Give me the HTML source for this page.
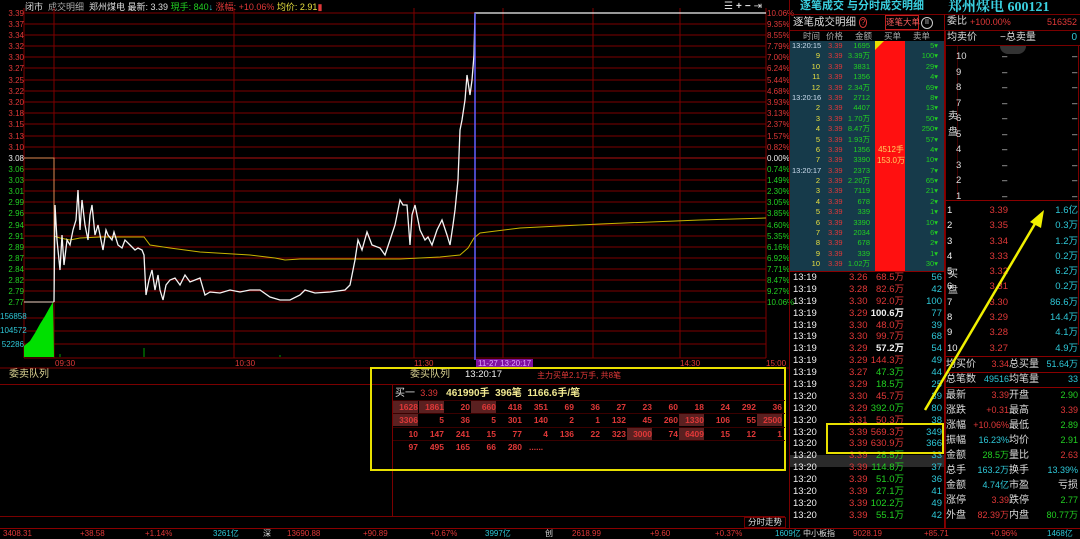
<!DOCTYPE html>
<html><head><meta charset="utf-8">
<style>
*{margin:0;padding:0;box-sizing:border-box}
body{width:1080px;height:538px;background:#000;overflow:hidden;position:relative;font-family:"Liberation Sans","Noto Sans CJK SC",sans-serif;font-size:9px;color:#ddd}
.a{position:absolute;white-space:nowrap;line-height:10px}
.r{color:#e03838}.g{color:#22d022}.c{color:#2ec8d8}.w{color:#f0f0f0}.y{color:#e8e040}.gr{color:#aaa}
.hl{position:absolute;height:1px;background:#7a0000}
.vl{position:absolute;width:1px;background:#7a0000}
.lab{position:absolute;left:0;width:24px;text-align:right;font-size:8px;line-height:9px}
.pct{position:absolute;left:767px;font-size:8px;line-height:9px}
.ob{font-size:10px;line-height:12px}
.q{position:absolute;width:25px;text-align:right;font-size:8.5px;line-height:12px;color:#e03838;font-weight:bold}
.qb{background:#5a2020}
</style></head><body>

<div class="a" style="left:25px;top:2px;font-size:9px;color:#ddd">闭市&nbsp; <span class="gr">成交明细</span>&nbsp; 郑州煤电 最新: 3.39 <span class="g">現手: 840</span><span class="c">↓</span> <span class="r">涨幅: +10.06%</span> <span class="y">均价: 2.91</span><span class="r">▮</span></div>
<div class="a" style="left:724px;top:2px;font-size:10px;color:#ddd;letter-spacing:3px">☰<b>+</b><b>−</b>⇥</div>

<svg width="800" height="370" style="position:absolute;left:0;top:0">
<g stroke="#7e0000" stroke-width="1">
<line x1="24" y1="13" x2="766" y2="13"/><line x1="24" y1="24" x2="766" y2="24"/><line x1="24" y1="35" x2="766" y2="35"/><line x1="24" y1="46" x2="766" y2="46"/><line x1="24" y1="57" x2="766" y2="57"/><line x1="24" y1="68" x2="766" y2="68"/><line x1="24" y1="80" x2="766" y2="80"/><line x1="24" y1="91" x2="766" y2="91"/><line x1="24" y1="102" x2="766" y2="102"/><line x1="24" y1="113" x2="766" y2="113"/><line x1="24" y1="124" x2="766" y2="124"/><line x1="24" y1="136" x2="766" y2="136"/><line x1="24" y1="147" x2="766" y2="147"/><line x1="24" y1="158" x2="766" y2="158" stroke="#b01010"/><line x1="24" y1="169" x2="766" y2="169"/><line x1="24" y1="180" x2="766" y2="180"/><line x1="24" y1="191" x2="766" y2="191"/><line x1="24" y1="202" x2="766" y2="202"/><line x1="24" y1="213" x2="766" y2="213"/><line x1="24" y1="225" x2="766" y2="225"/><line x1="24" y1="236" x2="766" y2="236"/><line x1="24" y1="247" x2="766" y2="247"/><line x1="24" y1="258" x2="766" y2="258"/><line x1="24" y1="269" x2="766" y2="269"/><line x1="24" y1="280" x2="766" y2="280"/><line x1="24" y1="291" x2="766" y2="291"/><line x1="24" y1="302" x2="766" y2="302"/>
<line x1="24" y1="318" x2="766" y2="318"/><line x1="24" y1="331" x2="766" y2="331"/><line x1="24" y1="344" x2="766" y2="344"/><line x1="24" y1="358" x2="766" y2="358"/>
<line x1="54" y1="8" x2="54" y2="358"/><line x1="234" y1="8" x2="234" y2="358"/><line x1="414" y1="8" x2="414" y2="358"/><line x1="503" y1="8" x2="503" y2="358"/><line x1="593" y1="8" x2="593" y2="358"/><line x1="680" y1="8" x2="680" y2="358"/><line x1="766" y1="8" x2="766" y2="358"/>
<line x1="24" y1="8" x2="24" y2="358"/>
<line x1="0" y1="368" x2="790" y2="368"/>
</g>
<polygon fill="#00e000" points="24,357 24,346 30,341 35,333 40,324 45,316 50,307 53,302 54,357"/>
<g stroke="#00a000"><line x1="144" y1="357" x2="144" y2="348"/><line x1="60" y1="357" x2="60" y2="354"/><line x1="280" y1="357" x2="280" y2="355"/></g>
<polyline fill="none" stroke="#e08850" stroke-width="1" points="24,158 54,158 54,302"/>
<polyline fill="none" stroke="#f0d0c0" points="24,302 54,302"/>
<polyline fill="none" stroke="#c8b400" stroke-width="1" points="54,236 60,238 70,240 80,238 100,237 144,237 150,245 170,248 200,252 250,255 275,258 285,260 300,259 350,259 400,259 440,257 460,255 468,248 474,238 480,233 520,228 600,224 700,220 766,218"/>
<polyline fill="none" stroke="#f4f4f4" stroke-width="1.3" points="54,302 55,205 57,240 60,270 62,235 64,265 67,240 70,245 73,230 76,220 78,190 80,230 82,200 85,225 88,240 90,215 92,205 95,235 98,225 100,235 103,250 106,230 108,235 112,240 114,232 118,245 122,248 125,240 130,245 135,250 138,248 142,250 144,255 146,295 149,280 152,270 155,290 158,275 160,290 163,300 166,285 170,280 175,278 180,285 185,275 190,282 195,280 200,278 205,295 210,292 220,293 230,290 240,292 250,290 260,290 270,297 280,300 290,300 300,295 305,290 315,293 330,292 345,290 350,285 355,260 358,240 362,250 367,232 372,245 380,248 385,255 390,240 395,225 400,200 403,205 407,205 410,245 412,215 415,205 418,220 420,230 425,240 428,237 432,245 437,230 442,220 447,235 450,245 453,225 455,210 458,180 460,130 462,120 465,100 467,75 470,95 472,80 474,55 475,13 766,13"/>
<line x1="475" y1="13" x2="475" y2="360" stroke="#6060ff" stroke-width="1.5"/>
</svg>

<div class="lab r" style="top:9px">3.39</div><div class="lab r" style="top:20px">3.37</div><div class="lab r" style="top:31px">3.34</div><div class="lab r" style="top:42px">3.32</div><div class="lab r" style="top:53px">3.30</div><div class="lab r" style="top:64px">3.27</div><div class="lab r" style="top:76px">3.25</div><div class="lab r" style="top:87px">3.22</div><div class="lab r" style="top:98px">3.20</div><div class="lab r" style="top:109px">3.18</div><div class="lab r" style="top:120px">3.15</div><div class="lab r" style="top:132px">3.13</div><div class="lab r" style="top:143px">3.10</div><div class="lab w" style="top:154px">3.08</div><div class="lab g" style="top:165px">3.06</div><div class="lab g" style="top:176px">3.03</div><div class="lab g" style="top:187px">3.01</div><div class="lab g" style="top:198px">2.99</div><div class="lab g" style="top:209px">2.96</div><div class="lab g" style="top:221px">2.94</div><div class="lab g" style="top:232px">2.91</div><div class="lab g" style="top:243px">2.89</div><div class="lab g" style="top:254px">2.87</div><div class="lab g" style="top:265px">2.84</div><div class="lab g" style="top:276px">2.82</div><div class="lab g" style="top:287px">2.79</div><div class="lab g" style="top:298px">2.77</div>
<div class="lab c" style="top:312px">156858</div><div class="lab c" style="top:326px">104572</div><div class="lab c" style="top:340px">52286</div>

<div class="pct r" style="top:9px">10.06%</div><div class="pct r" style="top:20px">9.35%</div><div class="pct r" style="top:31px">8.55%</div><div class="pct r" style="top:42px">7.79%</div><div class="pct r" style="top:53px">7.00%</div><div class="pct r" style="top:64px">6.24%</div><div class="pct r" style="top:76px">5.44%</div><div class="pct r" style="top:87px">4.68%</div><div class="pct r" style="top:98px">3.93%</div><div class="pct r" style="top:109px">3.13%</div><div class="pct r" style="top:120px">2.37%</div><div class="pct r" style="top:132px">1.57%</div><div class="pct r" style="top:143px">0.82%</div><div class="pct w" style="top:154px">0.00%</div><div class="pct g" style="top:165px">0.74%</div><div class="pct g" style="top:176px">1.49%</div><div class="pct g" style="top:187px">2.30%</div><div class="pct g" style="top:198px">3.05%</div><div class="pct g" style="top:209px">3.85%</div><div class="pct g" style="top:221px">4.60%</div><div class="pct g" style="top:232px">5.35%</div><div class="pct g" style="top:243px">6.16%</div><div class="pct g" style="top:254px">6.92%</div><div class="pct g" style="top:265px">7.71%</div><div class="pct g" style="top:276px">8.47%</div><div class="pct g" style="top:287px">9.27%</div><div class="pct g" style="top:298px">10.06%</div>

<div class="a r" style="left:55px;top:359px;font-size:8px">09:30</div>
<div class="a r" style="left:235px;top:359px;font-size:8px">10:30</div>
<div class="a r" style="left:414px;top:359px;font-size:8px">11:30</div>
<div class="a" style="left:476px;top:359px;font-size:8px;background:#8010a0;color:#e0a0ff;padding:0 2px">11-27 13:20:17</div>
<div class="a r" style="left:680px;top:359px;font-size:8px">14:30</div>
<div class="a r" style="left:766px;top:359px;font-size:8px">15:00</div>

<div class="a y" style="left:9px;top:370px;font-size:10px;color:#d8d090">委卖队列</div>
<div class="hl" style="left:0;top:384px;width:372px"></div>
<div class="hl" style="left:0;top:516px;width:785px"></div>
<div class="vl" style="left:392px;top:384px;height:132px"></div>

<div style="position:absolute;left:370px;top:367px;width:416px;height:104px;border:2px solid #e8e000"></div>
<div class="a" style="left:410px;top:370px;font-size:10px;color:#d8d090">委买队列</div>
<div class="a w" style="left:465px;top:370px;font-size:9.5px">13:20:17</div>
<div class="a r" style="left:537px;top:371px;font-size:8px">主力买单2.1万手, 共8笔</div>
<div class="hl" style="left:372px;top:384px;width:412px"></div>
<div class="a" style="left:395px;top:388px;font-size:10px;color:#ddd">买一 <span class="r" style="font-size:9px">&nbsp;3.39</span> &nbsp; <b class="y" style="color:#f0e890">461990手&nbsp; 396笔&nbsp; 1166.6手/笔</b></div>
<div class="hl" style="left:393px;top:400px;width:392px;background:#3a0000"></div>
<div class="hl" style="left:393px;top:413px;width:392px;background:#3a0000"></div>
<div class="hl" style="left:393px;top:427px;width:392px;background:#3a0000"></div>
<div class="hl" style="left:393px;top:440px;width:392px;background:#3a0000"></div>
<div style="position:absolute;left:393px;top:401px">
<div class="q qb" style="left:0">1628</div><div class="q qb" style="left:26px">1861</div><div class="q" style="left:52px">20</div><div class="q qb" style="left:78px">660</div><div class="q" style="left:104px">418</div><div class="q" style="left:130px">351</div><div class="q" style="left:156px">69</div><div class="q" style="left:182px">36</div><div class="q" style="left:208px">27</div><div class="q" style="left:234px">23</div><div class="q" style="left:260px">60</div><div class="q" style="left:286px">18</div><div class="q" style="left:312px">24</div><div class="q" style="left:338px">292</div><div class="q" style="left:364px">36</div>
</div>
<div style="position:absolute;left:393px;top:414px">
<div class="q qb" style="left:0">3306</div><div class="q" style="left:26px">5</div><div class="q" style="left:52px">36</div><div class="q" style="left:78px">5</div><div class="q" style="left:104px">301</div><div class="q" style="left:130px">140</div><div class="q" style="left:156px">2</div><div class="q" style="left:182px">1</div><div class="q" style="left:208px">132</div><div class="q" style="left:234px">45</div><div class="q" style="left:260px">260</div><div class="q qb" style="left:286px">1330</div><div class="q" style="left:312px">106</div><div class="q" style="left:338px">55</div><div class="q qb" style="left:364px">2500</div>
</div>
<div style="position:absolute;left:393px;top:428px">
<div class="q" style="left:0">10</div><div class="q" style="left:26px">147</div><div class="q" style="left:52px">241</div><div class="q" style="left:78px">15</div><div class="q" style="left:104px">77</div><div class="q" style="left:130px">4</div><div class="q" style="left:156px">136</div><div class="q" style="left:182px">22</div><div class="q" style="left:208px">323</div><div class="q qb" style="left:234px">3000</div><div class="q" style="left:260px">74</div><div class="q qb" style="left:286px">6409</div><div class="q" style="left:312px">15</div><div class="q" style="left:338px">12</div><div class="q" style="left:364px">1</div>
</div>
<div style="position:absolute;left:393px;top:441px">
<div class="q" style="left:0">97</div><div class="q" style="left:26px">495</div><div class="q" style="left:52px">165</div><div class="q" style="left:78px">66</div><div class="q" style="left:104px">280</div><div class="q" style="left:130px;text-align:left;padding-left:6px">......</div>
</div>

<div class="a" style="left:744px;top:517px;width:42px;height:11px;border:1px solid #6e0000;font-size:8.5px;line-height:9px;color:#ddd;text-align:center">分时走势</div>

<div class="vl" style="left:789px;top:0;height:528px"></div>
<div class="a" style="left:800px;top:1px;font-size:11px;font-weight:bold;color:#3ad0e0">逐笔成交 与分时成交明细</div>
<div class="a" style="left:948px;top:0px;font-size:14px;line-height:16px;font-weight:bold;color:#3ad0e0;font-family:'Liberation Serif','Noto Serif CJK SC',serif">郑州煤电 600121</div>
<div class="hl" style="left:790px;top:14px;width:290px"></div>
<div class="a" style="left:793px;top:17px;font-size:10.5px;color:#ddd">逐笔成交明细 <span class="r" style="font-size:8px;border:1px solid #e03838;border-radius:50%;padding:0 1px">?</span></div>
<div class="a r" style="left:885px;top:15px;width:34px;height:15px;border:1.5px solid #c02020;font-size:8.5px;line-height:12px;text-align:center;color:#ff6060">逐笔大单</div>
<div class="a" style="left:921px;top:17px;width:12px;height:12px;border-radius:50%;border:1.5px solid #ccc;font-size:7px;line-height:9px;text-align:center;color:#ddd">II</div>
<div class="vl" style="left:944px;top:14px;height:514px;background:#8a0000"></div>
<div class="hl" style="left:790px;top:30px;width:155px"></div>
<div class="a gr" style="left:803px;top:31px;font-size:8.5px">时间</div><div class="a gr" style="left:826px;top:31px;font-size:8.5px">价格</div><div class="a gr" style="left:855px;top:31px;font-size:8.5px">金额</div><div class="a gr" style="left:884px;top:31px;font-size:8.5px">买单</div><div class="a gr" style="left:913px;top:31px;font-size:8.5px">卖单</div>
<div style="position:absolute;left:790px;top:41px;width:154px;height:230px;background:#163a4a"></div>
<div style="position:absolute;left:875px;top:41px;width:30px;height:230px;background:#ff1010"></div>
<div style="position:absolute;left:875px;top:41px;width:0;height:0;border-top:9px solid #e8e000;border-right:9px solid transparent"></div>
<div class="a" style="left:877px;top:145px;width:28px;text-align:center;font-size:8px;color:#ffd060">4512手</div>
<div class="a" style="left:875px;top:156px;width:32px;text-align:center;font-size:8px;color:#ffd060">153.0万</div>
<div class="hl" style="left:790px;top:271px;width:155px;background:#8a0000"></div>

<div style="position:absolute;left:790px;top:41px;width:154px;font-size:7.5px;line-height:10.4px">
<div style="position:relative;height:10.4px"><span class="a" style="left:2px;color:#cde">13:20:15</span><span class="a r" style="left:38px">3.39</span><span class="a g" style="right:74px">1695</span><span class="a g" style="right:6px">5▾</span></div>
<div style="position:relative;height:10.4px"><span class="a y" style="right:124px">9</span><span class="a r" style="left:38px">3.39</span><span class="a g" style="right:74px">3.39万</span><span class="a g" style="right:6px">100▾</span></div>
<div style="position:relative;height:10.4px"><span class="a y" style="right:124px">10</span><span class="a r" style="left:38px">3.39</span><span class="a g" style="right:74px">3831</span><span class="a g" style="right:6px">29▾</span></div>
<div style="position:relative;height:10.4px"><span class="a y" style="right:124px">11</span><span class="a r" style="left:38px">3.39</span><span class="a g" style="right:74px">1356</span><span class="a g" style="right:6px">4▾</span></div>
<div style="position:relative;height:10.4px"><span class="a y" style="right:124px">12</span><span class="a r" style="left:38px">3.39</span><span class="a g" style="right:74px">2.34万</span><span class="a g" style="right:6px">69▾</span></div>
<div style="position:relative;height:10.4px"><span class="a" style="left:2px;color:#cde">13:20:16</span><span class="a r" style="left:38px">3.39</span><span class="a g" style="right:74px">2712</span><span class="a g" style="right:6px">8▾</span></div>
<div style="position:relative;height:10.4px"><span class="a y" style="right:124px">2</span><span class="a r" style="left:38px">3.39</span><span class="a g" style="right:74px">4407</span><span class="a g" style="right:6px">13▾</span></div>
<div style="position:relative;height:10.4px"><span class="a y" style="right:124px">3</span><span class="a r" style="left:38px">3.39</span><span class="a g" style="right:74px">1.70万</span><span class="a g" style="right:6px">50▾</span></div>
<div style="position:relative;height:10.4px"><span class="a y" style="right:124px">4</span><span class="a r" style="left:38px">3.39</span><span class="a g" style="right:74px">8.47万</span><span class="a g" style="right:6px">250▾</span></div>
<div style="position:relative;height:10.4px"><span class="a y" style="right:124px">5</span><span class="a r" style="left:38px">3.39</span><span class="a g" style="right:74px">1.93万</span><span class="a g" style="right:6px">57▾</span></div>
<div style="position:relative;height:10.4px"><span class="a y" style="right:124px">6</span><span class="a r" style="left:38px">3.39</span><span class="a g" style="right:74px">1356</span><span class="a g" style="right:6px">4▾</span></div>
<div style="position:relative;height:10.4px"><span class="a y" style="right:124px">7</span><span class="a r" style="left:38px">3.39</span><span class="a g" style="right:74px">3390</span><span class="a g" style="right:6px">10▾</span></div>
<div style="position:relative;height:10.4px"><span class="a" style="left:2px;color:#cde">13:20:17</span><span class="a r" style="left:38px">3.39</span><span class="a g" style="right:74px">2373</span><span class="a g" style="right:6px">7▾</span></div>
<div style="position:relative;height:10.4px"><span class="a y" style="right:124px">2</span><span class="a r" style="left:38px">3.39</span><span class="a g" style="right:74px">2.20万</span><span class="a g" style="right:6px">65▾</span></div>
<div style="position:relative;height:10.4px"><span class="a y" style="right:124px">3</span><span class="a r" style="left:38px">3.39</span><span class="a g" style="right:74px">7119</span><span class="a g" style="right:6px">21▾</span></div>
<div style="position:relative;height:10.4px"><span class="a y" style="right:124px">4</span><span class="a r" style="left:38px">3.39</span><span class="a g" style="right:74px">678</span><span class="a g" style="right:6px">2▾</span></div>
<div style="position:relative;height:10.4px"><span class="a y" style="right:124px">5</span><span class="a r" style="left:38px">3.39</span><span class="a g" style="right:74px">339</span><span class="a g" style="right:6px">1▾</span></div>
<div style="position:relative;height:10.4px"><span class="a y" style="right:124px">6</span><span class="a r" style="left:38px">3.39</span><span class="a g" style="right:74px">3390</span><span class="a g" style="right:6px">10▾</span></div>
<div style="position:relative;height:10.4px"><span class="a y" style="right:124px">7</span><span class="a r" style="left:38px">3.39</span><span class="a g" style="right:74px">2034</span><span class="a g" style="right:6px">6▾</span></div>
<div style="position:relative;height:10.4px"><span class="a y" style="right:124px">8</span><span class="a r" style="left:38px">3.39</span><span class="a g" style="right:74px">678</span><span class="a g" style="right:6px">2▾</span></div>
<div style="position:relative;height:10.4px"><span class="a y" style="right:124px">9</span><span class="a r" style="left:38px">3.39</span><span class="a g" style="right:74px">339</span><span class="a g" style="right:6px">1▾</span></div>
<div style="position:relative;height:10.4px"><span class="a y" style="right:124px">10</span><span class="a r" style="left:38px">3.39</span><span class="a g" style="right:74px">1.02万</span><span class="a g" style="right:6px">30▾</span></div>
</div>

<div style="position:absolute;left:790px;top:455px;width:154px;height:12px;background:#2a2a2a"></div>
<div style="position:absolute;left:790px;top:272px;width:154px;font-size:9.5px;line-height:11.9px">
<div style="position:relative;height:11.9px"><span class="a w" style="left:3px;line-height:11.9px">13:19</span><span class="a r" style="left:59px;line-height:11.9px">3.26</span><span class="a r" style="right:40px;line-height:11.9px">68.5万</span><span class="a c" style="right:2px;line-height:11.9px">56</span></div>
<div style="position:relative;height:11.9px"><span class="a w" style="left:3px;line-height:11.9px">13:19</span><span class="a r" style="left:59px;line-height:11.9px">3.28</span><span class="a r" style="right:40px;line-height:11.9px">82.6万</span><span class="a c" style="right:2px;line-height:11.9px">42</span></div>
<div style="position:relative;height:11.9px"><span class="a w" style="left:3px;line-height:11.9px">13:19</span><span class="a r" style="left:59px;line-height:11.9px">3.30</span><span class="a r" style="right:40px;line-height:11.9px">92.0万</span><span class="a c" style="right:2px;line-height:11.9px">100</span></div>
<div style="position:relative;height:11.9px"><span class="a w" style="left:3px;line-height:11.9px">13:19</span><span class="a r" style="left:59px;line-height:11.9px">3.29</span><span class="a w" style="right:40px;line-height:11.9px;font-weight:bold">100.6万</span><span class="a c" style="right:2px;line-height:11.9px">77</span></div>
<div style="position:relative;height:11.9px"><span class="a w" style="left:3px;line-height:11.9px">13:19</span><span class="a r" style="left:59px;line-height:11.9px">3.30</span><span class="a r" style="right:40px;line-height:11.9px">48.0万</span><span class="a c" style="right:2px;line-height:11.9px">39</span></div>
<div style="position:relative;height:11.9px"><span class="a w" style="left:3px;line-height:11.9px">13:19</span><span class="a r" style="left:59px;line-height:11.9px">3.30</span><span class="a r" style="right:40px;line-height:11.9px">99.7万</span><span class="a c" style="right:2px;line-height:11.9px">68</span></div>
<div style="position:relative;height:11.9px"><span class="a w" style="left:3px;line-height:11.9px">13:19</span><span class="a r" style="left:59px;line-height:11.9px">3.29</span><span class="a w" style="right:40px;line-height:11.9px;font-weight:bold">57.2万</span><span class="a c" style="right:2px;line-height:11.9px">54</span></div>
<div style="position:relative;height:11.9px"><span class="a w" style="left:3px;line-height:11.9px">13:19</span><span class="a r" style="left:59px;line-height:11.9px">3.29</span><span class="a r" style="right:40px;line-height:11.9px">144.3万</span><span class="a c" style="right:2px;line-height:11.9px">49</span></div>
<div style="position:relative;height:11.9px"><span class="a w" style="left:3px;line-height:11.9px">13:19</span><span class="a r" style="left:59px;line-height:11.9px">3.27</span><span class="a g" style="right:40px;line-height:11.9px">47.3万</span><span class="a c" style="right:2px;line-height:11.9px">44</span></div>
<div style="position:relative;height:11.9px"><span class="a w" style="left:3px;line-height:11.9px">13:19</span><span class="a r" style="left:59px;line-height:11.9px">3.29</span><span class="a g" style="right:40px;line-height:11.9px">18.5万</span><span class="a c" style="right:2px;line-height:11.9px">25</span></div>
<div style="position:relative;height:11.9px"><span class="a w" style="left:3px;line-height:11.9px">13:20</span><span class="a r" style="left:59px;line-height:11.9px">3.30</span><span class="a r" style="right:40px;line-height:11.9px">45.7万</span><span class="a c" style="right:2px;line-height:11.9px">39</span></div>
<div style="position:relative;height:11.9px"><span class="a w" style="left:3px;line-height:11.9px">13:20</span><span class="a r" style="left:59px;line-height:11.9px">3.29</span><span class="a g" style="right:40px;line-height:11.9px">392.0万</span><span class="a c" style="right:2px;line-height:11.9px">80</span></div>
<div style="position:relative;height:11.9px"><span class="a w" style="left:3px;line-height:11.9px">13:20</span><span class="a r" style="left:59px;line-height:11.9px">3.31</span><span class="a r" style="right:40px;line-height:11.9px">50.3万</span><span class="a c" style="right:2px;line-height:11.9px">38</span></div>
<div style="position:relative;height:11.9px"><span class="a w" style="left:3px;line-height:11.9px">13:20</span><span class="a r" style="left:59px;line-height:11.9px">3.39</span><span class="a r" style="right:40px;line-height:11.9px">569.3万</span><span class="a c" style="right:2px;line-height:11.9px">349</span></div>
<div style="position:relative;height:11.9px"><span class="a w" style="left:3px;line-height:11.9px">13:20</span><span class="a r" style="left:59px;line-height:11.9px">3.39</span><span class="a r" style="right:40px;line-height:11.9px">630.9万</span><span class="a c" style="right:2px;line-height:11.9px">366</span></div>
<div style="position:relative;height:11.9px"><span class="a w" style="left:3px;line-height:11.9px">13:20</span><span class="a r" style="left:59px;line-height:11.9px">3.39</span><span class="a g" style="right:40px;line-height:11.9px">28.5万</span><span class="a c" style="right:2px;line-height:11.9px">33</span></div>
<div style="position:relative;height:11.9px"><span class="a w" style="left:3px;line-height:11.9px">13:20</span><span class="a r" style="left:59px;line-height:11.9px">3.39</span><span class="a g" style="right:40px;line-height:11.9px">114.8万</span><span class="a c" style="right:2px;line-height:11.9px">37</span></div>
<div style="position:relative;height:11.9px"><span class="a w" style="left:3px;line-height:11.9px">13:20</span><span class="a r" style="left:59px;line-height:11.9px">3.39</span><span class="a g" style="right:40px;line-height:11.9px">51.0万</span><span class="a c" style="right:2px;line-height:11.9px">36</span></div>
<div style="position:relative;height:11.9px"><span class="a w" style="left:3px;line-height:11.9px">13:20</span><span class="a r" style="left:59px;line-height:11.9px">3.39</span><span class="a g" style="right:40px;line-height:11.9px">27.1万</span><span class="a c" style="right:2px;line-height:11.9px">41</span></div>
<div style="position:relative;height:11.9px"><span class="a w" style="left:3px;line-height:11.9px">13:20</span><span class="a r" style="left:59px;line-height:11.9px">3.39</span><span class="a g" style="right:40px;line-height:11.9px">102.2万</span><span class="a c" style="right:2px;line-height:11.9px">49</span></div>
<div style="position:relative;height:11.9px"><span class="a w" style="left:3px;line-height:11.9px">13:20</span><span class="a r" style="left:59px;line-height:11.9px">3.39</span><span class="a g" style="right:40px;line-height:11.9px">55.1万</span><span class="a c" style="right:2px;line-height:11.9px">42</span></div>
</div>

<div class="a ob" style="left:947px;top:16px;color:#ddd">委比</div>
<div class="a ob r" style="left:970px;top:16px;font-size:9px">+100.00%</div>
<div class="a ob r" style="right:3px;top:16px;font-size:9px">516352</div>
<div class="hl" style="left:945px;top:30px;width:135px"></div>
<div class="a ob" style="left:947px;top:32px;color:#ddd">均卖价</div>
<div class="a ob" style="left:1000px;top:32px;color:#ddd">−总卖量</div>
<div class="a ob c" style="right:3px;top:32px">0</div>
<div class="hl" style="left:945px;top:45px;width:135px"></div>
<div class="vl" style="left:945px;top:30px;height:498px"></div>
<div class="vl" style="left:1078px;top:45px;height:300px"></div>
<div style="position:absolute;left:1000px;top:46px;width:26px;height:8px;background:#333;border-radius:0 0 13px 13px"></div>
<div class="a" style="left:948px;top:112px;font-size:10px;color:#ddd">卖</div>
<div class="a" style="left:948px;top:128px;font-size:10px;color:#ddd">盘</div>
<div class="a" style="left:948px;top:270px;font-size:10px;color:#ddd">买</div>
<div class="a" style="left:948px;top:286px;font-size:10px;color:#ddd">盘</div>
<div class="vl" style="left:957px;top:46px;height:152px;background:#400000"></div>
<div style="position:absolute;left:956px;top:49px;font-size:9.5px;line-height:15.5px;color:#ddd">
<div>10</div><div>9</div><div>8</div><div>7</div><div>6</div><div>5</div><div>4</div><div>3</div><div>2</div><div>1</div></div>
<div style="position:absolute;left:1002px;top:49px;font-size:9.5px;line-height:15.5px;color:#ddd">
<div>–</div><div>–</div><div>–</div><div>–</div><div>–</div><div>–</div><div>–</div><div>–</div><div>–</div><div>–</div></div>
<div style="position:absolute;left:1072px;top:49px;font-size:9.5px;line-height:15.5px;color:#ddd">
<div>–</div><div>–</div><div>–</div><div>–</div><div>–</div><div>–</div><div>–</div><div>–</div><div>–</div><div>–</div></div>
<div class="hl" style="left:945px;top:200px;width:135px;background:#8a0000"></div>
<div style="position:absolute;left:947px;top:203px;width:131px;font-size:9.5px;line-height:15.3px">
<div style="position:relative;height:15.3px"><span class="a w" style="left:0;line-height:15.3px">1</span><span class="a r" style="right:70px;line-height:15.3px">3.39</span><span class="a c" style="right:0;line-height:15.3px">1.6亿</span></div>
<div style="position:relative;height:15.3px"><span class="a w" style="left:0;line-height:15.3px">2</span><span class="a r" style="right:70px;line-height:15.3px">3.35</span><span class="a c" style="right:0;line-height:15.3px">0.3万</span></div>
<div style="position:relative;height:15.3px"><span class="a w" style="left:0;line-height:15.3px">3</span><span class="a r" style="right:70px;line-height:15.3px">3.34</span><span class="a c" style="right:0;line-height:15.3px">1.2万</span></div>
<div style="position:relative;height:15.3px"><span class="a w" style="left:0;line-height:15.3px">4</span><span class="a r" style="right:70px;line-height:15.3px">3.33</span><span class="a c" style="right:0;line-height:15.3px">0.2万</span></div>
<div style="position:relative;height:15.3px"><span class="a w" style="left:0;line-height:15.3px">5</span><span class="a r" style="right:70px;line-height:15.3px">3.32</span><span class="a c" style="right:0;line-height:15.3px">6.2万</span></div>
<div style="position:relative;height:15.3px"><span class="a w" style="left:0;line-height:15.3px">6</span><span class="a r" style="right:70px;line-height:15.3px">3.31</span><span class="a c" style="right:0;line-height:15.3px">0.2万</span></div>
<div style="position:relative;height:15.3px"><span class="a w" style="left:0;line-height:15.3px">7</span><span class="a r" style="right:70px;line-height:15.3px">3.30</span><span class="a c" style="right:0;line-height:15.3px">86.6万</span></div>
<div style="position:relative;height:15.3px"><span class="a w" style="left:0;line-height:15.3px">8</span><span class="a r" style="right:70px;line-height:15.3px">3.29</span><span class="a c" style="right:0;line-height:15.3px">14.4万</span></div>
<div style="position:relative;height:15.3px"><span class="a w" style="left:0;line-height:15.3px">9</span><span class="a r" style="right:70px;line-height:15.3px">3.28</span><span class="a c" style="right:0;line-height:15.3px">4.1万</span></div>
<div style="position:relative;height:15.3px"><span class="a w" style="left:0;line-height:15.3px">10</span><span class="a r" style="right:70px;line-height:15.3px">3.27</span><span class="a c" style="right:0;line-height:15.3px">4.9万</span></div>
</div>
<div class="hl" style="left:945px;top:356px;width:135px;background:#8a0000"></div>
<div class="hl" style="left:945px;top:372px;width:135px;background:#8a0000"></div>
<div class="hl" style="left:945px;top:387px;width:135px;background:#8a0000"></div>
<div style="position:absolute;left:946px;top:357px;width:132px;font-size:10px">
<div style="position:relative;height:15.3px"><span class="a" style="left:0;line-height:15px;color:#ddd">均买价</span><span class="a r" style="right:69px;line-height:15px;font-size:9px">3.34</span><span class="a" style="left:63px;line-height:15px;color:#ddd">总买量</span><span class="a c" style="right:0;line-height:15px;font-size:9px">51.64万</span></div>
<div style="position:relative;height:15.3px"><span class="a" style="left:0;line-height:15px;color:#ddd">总笔数</span><span class="a c" style="right:69px;line-height:15px;font-size:9px">49516</span><span class="a" style="left:63px;line-height:15px;color:#ddd">均笔量</span><span class="a c" style="right:0;line-height:15px;font-size:9px">33</span></div>
<div style="position:relative;height:15.1px"><span class="a" style="left:0;line-height:15px;color:#ddd">最新</span><span class="a r" style="right:69px;line-height:15px;font-size:9px">3.39</span><span class="a" style="left:63px;line-height:15px;color:#ddd">开盘</span><span class="a g" style="right:0;line-height:15px;font-size:9px">2.90</span></div>
<div style="position:relative;height:15.1px"><span class="a" style="left:0;line-height:15px;color:#ddd">涨跌</span><span class="a r" style="right:69px;line-height:15px;font-size:9px">+0.31</span><span class="a" style="left:63px;line-height:15px;color:#ddd">最高</span><span class="a r" style="right:0;line-height:15px;font-size:9px">3.39</span></div>
<div style="position:relative;height:15.1px"><span class="a" style="left:0;line-height:15px;color:#ddd">涨幅</span><span class="a r" style="right:69px;line-height:15px;font-size:9px">+10.06%</span><span class="a" style="left:63px;line-height:15px;color:#ddd">最低</span><span class="a g" style="right:0;line-height:15px;font-size:9px">2.89</span></div>
<div style="position:relative;height:15.1px"><span class="a" style="left:0;line-height:15px;color:#ddd">振幅</span><span class="a c" style="right:69px;line-height:15px;font-size:9px">16.23%</span><span class="a" style="left:63px;line-height:15px;color:#ddd">均价</span><span class="a g" style="right:0;line-height:15px;font-size:9px">2.91</span></div>
<div style="position:relative;height:15.1px"><span class="a" style="left:0;line-height:15px;color:#ddd">金额</span><span class="a g" style="right:69px;line-height:15px;font-size:9px">28.5万</span><span class="a" style="left:63px;line-height:15px;color:#ddd">量比</span><span class="a r" style="right:0;line-height:15px;font-size:9px">2.63</span></div>
<div style="position:relative;height:15.1px"><span class="a" style="left:0;line-height:15px;color:#ddd">总手</span><span class="a c" style="right:69px;line-height:15px;font-size:9px">163.2万</span><span class="a" style="left:63px;line-height:15px;color:#ddd">换手</span><span class="a c" style="right:0;line-height:15px;font-size:9px">13.39%</span></div>
<div style="position:relative;height:15.1px"><span class="a" style="left:0;line-height:15px;color:#ddd">金额</span><span class="a c" style="right:69px;line-height:15px;font-size:9px">4.74亿</span><span class="a" style="left:63px;line-height:15px;color:#ddd">市盈</span><span class="a" style="right:0;line-height:15px;color:#ddd">亏损</span></div>
<div style="position:relative;height:15.1px"><span class="a" style="left:0;line-height:15px;color:#ddd">涨停</span><span class="a r" style="right:69px;line-height:15px;font-size:9px">3.39</span><span class="a" style="left:63px;line-height:15px;color:#ddd">跌停</span><span class="a g" style="right:0;line-height:15px;font-size:9px">2.77</span></div>
<div style="position:relative;height:15.1px"><span class="a" style="left:0;line-height:15px;color:#ddd">外盘</span><span class="a r" style="right:69px;line-height:15px;font-size:9px">82.39万</span><span class="a" style="left:63px;line-height:15px;color:#ddd">内盘</span><span class="a g" style="right:0;line-height:15px;font-size:9px">80.77万</span></div>
</div>

<div style="position:absolute;left:826px;top:423px;width:118px;height:31px;border:2px solid #e8e000"></div>
<svg width="1080" height="538" style="position:absolute;left:0;top:0;pointer-events:none">
<line x1="925" y1="410" x2="1036" y2="222" stroke="#f0f000" stroke-width="2.5"/>
<polygon points="1044,210 1030,222 1041,228" fill="#f0f000"/>
</svg>

<div class="hl" style="left:0;top:528px;width:1080px;background:#8a0000"></div>
<div style="position:absolute;left:0;top:529px;width:1080px;height:9px;font-size:8px;line-height:9px">
<span class="a r" style="left:3px">3408.31</span><span class="a r" style="left:80px">+38.58</span><span class="a r" style="left:145px">+1.14%</span><span class="a c" style="left:213px">3261亿</span><span class="a" style="left:263px;color:#ddd">深</span><span class="a r" style="left:287px">13690.88</span><span class="a r" style="left:363px">+90.89</span><span class="a r" style="left:430px">+0.67%</span><span class="a c" style="left:485px">3997亿</span><span class="a" style="left:545px;color:#ddd">创</span><span class="a r" style="left:572px">2618.99</span><span class="a r" style="left:650px">+9.60</span><span class="a r" style="left:715px">+0.37%</span><span class="a c" style="left:775px">1609亿</span><span class="a" style="left:803px;color:#ddd">中小板指</span><span class="a r" style="left:853px">9028.19</span><span class="a r" style="left:924px">+85.71</span><span class="a r" style="left:990px">+0.96%</span><span class="a c" style="left:1047px">1468亿</span>
</div>
</body></html>
